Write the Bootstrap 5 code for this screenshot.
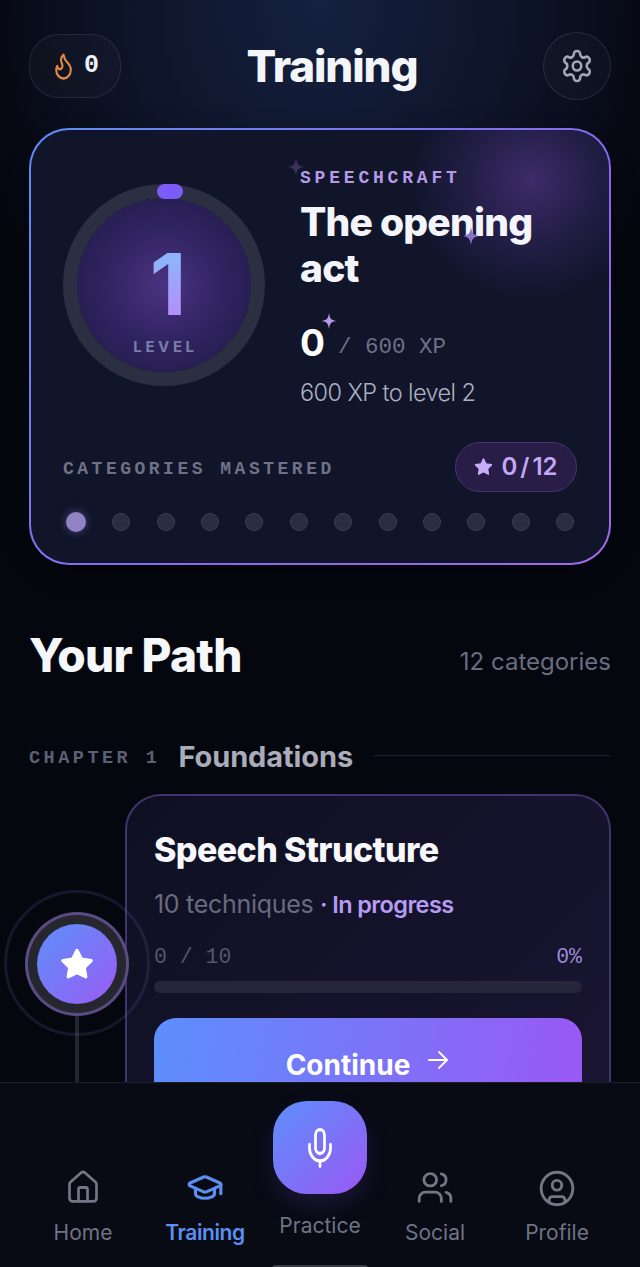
<!DOCTYPE html>
<html lang="en">
<head>
  <meta charset="UTF-8" />
  <meta name="viewport" content="width=device-width, initial-scale=1.0"/>
  <title>Training</title>
  <link href="https://cdn.jsdelivr.net/npm/bootstrap@5.3.0/dist/css/bootstrap.min.css" rel="stylesheet">
  <style>
    html, body { height: 100%; }
    body {
      height: 1267px;
      overflow: hidden;
      position: relative;
      font-family: "Inter", sans-serif;
      color: #f4f5fa;
      background:
        radial-gradient(ellipse 360px 430px at 50% 0, #15213f 0%, rgba(18,26,52,.75) 50%, rgba(5,7,15,0) 100%),
        #05070f;
    }
    .mono { font-family: "Liberation Mono", monospace; }
    .page { padding: 32px 29px 0; }
    .top-bar { height: 68px; }
    .streak-pill {
      width: 92px; height: 64px; border-radius: 30px;
      border: 1px solid rgba(255,255,255,.09);
      background: rgba(255,255,255,.025);
    }
    .streak-pill span { font-size: 25px; font-weight: 700; color: #eef0f6; }
    .page-title { font-size: 44px; font-weight: 800; letter-spacing: -1.1px; margin: 0; line-height: 1; color: #f4f5fa; }
    .gear-btn {
      width: 68px; height: 68px; border-radius: 50%;
      border: 1px solid rgba(255,255,255,.1);
      background: rgba(255,255,255,.025);
    }
    .hero-card {
      position: relative;
      height: 437px;
      margin-top: 28px;
      border: 2px solid transparent;
      border-radius: 40px;
      background:
        radial-gradient(circle 122px at 500px 50px, rgba(72,48,122,.8) 0%, rgba(56,40,102,.48) 50%, rgba(16,21,40,0) 100%) padding-box,
        linear-gradient(#10152a, #10152a) padding-box,
        linear-gradient(135deg, #5f8cf5 0%, #8a67ee 60%, #a06ae8 100%) border-box;
      padding: 54px 32px 0;
      box-shadow: 0 8px 24px rgba(0,0,0,.3);
    }
    .level-ring {
      width: 202px; height: 202px; flex: none;
      border-radius: 50%;
      border: 14px solid #2c2e42;
      background: radial-gradient(circle, #4a3380 0%, #2f2360 50%, #1f1a44 100%);
      background-origin: padding-box;
      background-clip: padding-box;
      position: relative;
    }
    .ring-cap {
      position: absolute; top: -14px; left: 80px;
      width: 26px; height: 15px; border-radius: 8px;
      background: #7c5cf6;
    }
    .level-num {
      font-size: 85px; font-weight: 700; line-height: 1;
      margin-top: 44px; margin-left: 8px;
      background: linear-gradient(180deg, #8fb4fb 20%, #b092f8 80%);
      -webkit-background-clip: text; background-clip: text; color: transparent;
    }
    .level-word { font-size: 15px; font-weight: 700; letter-spacing: 3.6px; color: #7a7ea6; margin-top: 9px; margin-left: 3px; }
    .hero-info { margin-left: 35px; margin-top: -16px; }
    .hero-eyebrow { font-size: 18px; font-weight: 700; letter-spacing: 3.8px; color: #b69ae8; line-height: 20px; }
    .hero-title { font-size: 39px; font-weight: 800; line-height: 46px; letter-spacing: -.8px; margin: 11px 0 0; color: #f4f5fa; }
    .xp-row { margin-top: 29px; line-height: 46px; }
    .xp-now { font-size: 37px; font-weight: 700; color: #fff; }
    .xp-max { font-size: 22.5px; color: #6d7185; margin-left: 13px; vertical-align: 3px; }
    .xp-left { font-size: 23.5px; font-weight: 300; letter-spacing: -.6px; color: #adb0bf; margin-top: 6px; line-height: 28px; }
    .mastered-label { font-size: 18px; font-weight: 700; letter-spacing: 3.5px; color: #6e7288; margin-top: 4px; }
    .mastered-row { margin-top: 35px; }
    .star-badge {
      width: 122px; height: 50px; border-radius: 25px;
      border: 1px solid #46346f;
      background: #281d47;
      color: #c4a6f7; font-size: 24px; font-weight: 600; word-spacing: -3px;
    }
    .dot-row { margin: 20px 3px 0 1px; padding-left: 2px; }
    .step-dot {
      width: 18px; height: 18px; border-radius: 50%;
      background: #2a2d3f; border: 1px solid #3d4052;
    }
    .step-dot.on { width: 20px; height: 20px; background: #9182c4; border: 0; box-shadow: 0 0 8px rgba(140,120,210,.5); }
    .sparkle { position: absolute; }
    .path-head { margin-top: 62px; }
    .path-title { font-size: 46px; font-weight: 800; letter-spacing: -.7px; margin: 0; line-height: 56px; color: #f6f7fb; }
    .path-count { font-size: 24px; color: #696d80; margin-top: 14px; }
    .chapter-row { margin-top: 54px; height: 40px; }
    .chapter-tag { font-size: 18.5px; font-weight: 700; letter-spacing: 3.5px; color: #5c6073; margin-top: 3px; }
    .chapter-name { font-size: 29px; font-weight: 700; color: #a9acb9; margin-left: 18px; letter-spacing: -.1px; }
    .chapter-rule { height: 1px; background: #1b1e2b; margin: 0 0 4px 20px; }
    .path-row { margin-top: 17px; }
    .path-rail { width: 96px; flex: none; position: relative; padding-top: 130px; z-index: 4; }
    .path-node {
      width: 80px; height: 80px; border-radius: 50%;
      background: linear-gradient(135deg, #5c8ffa 0%, #9a5cf4 100%);
      box-shadow: 0 0 0 9px #26262f, 0 0 0 12px #5a4b82;
      position: relative; z-index: 2; margin-left: 8px;
    }
    .path-halo {
      position: absolute; left: -25px; top: 96px;
      width: 146px; height: 146px; border-radius: 50%;
      border: 3px solid rgba(90,75,140,.24);
    }
    .path-line { width: 4px; height: 80px; background: #24252e; margin: 11px 0 0 46px; }
    .topic-card {
      width: 486px; flex: none;
      padding: 33px 27px 0;
      border: 2px solid #42326e;
      border-radius: 36px;
      height: 340px;
      color: #f4f5fa;
      background: linear-gradient(135deg, #0e1022 0%, #1a1533 100%);
      position: relative;
      background-clip: padding-box;
    }
    .topic-title { font-size: 34px; font-weight: 800; letter-spacing: -.6px; line-height: 42px; margin: 0; color: #f8f8fc; }
    .topic-sub { font-size: 25px; line-height: 30px; margin-top: 18px; color: #686b7e; letter-spacing: -.3px; }
    .topic-state { font-size: 23.5px; font-weight: 600; color: #b79cf4; letter-spacing: -.6px; }
    .topic-nums { font-size: 21.5px; margin-top: 25px; color: #545768; line-height: 24px; }
    .topic-pct { color: #9c8ad6; }
    .topic-bar { height: 12px; margin-top: 12px; background: #25263a; border-radius: 6px; }
    .btn-continue {
      width: 100%; height: 92px; margin-top: 25px; padding-top: 26px;
      border: 0; border-radius: 22px;
      background: linear-gradient(100deg, #5c8ffc 0%, #9a58f4 100%);
      color: #fff; font-size: 28px; font-weight: 700;
    }
    .tab-bar {
      position: absolute; left: 0; right: 0; bottom: 0; height: 185px;
      background: #080a14;
      border-top: 1px solid #1c1e29;
      z-index: 5;
    }
    .tab-item {
      position: absolute; top: 86px; width: 120px;
      text-align: center; font-size: 21px; line-height: 28px; color: #6f7384;
    }
    .tab-item svg { display: block; margin: 0 auto 13px; }
    .tab-item.short svg { margin-bottom: 11px; }
    .tab-item.active { color: #5b8ff0; font-weight: 600; letter-spacing: -.4px; }
    .mic-btn {
      position: absolute; left: 273px; top: 18px;
      width: 94px; height: 93px; border-radius: 34px;
      background: linear-gradient(135deg, #5c8ffa 0%, #9a58f4 100%);
      box-shadow: 0 12px 24px rgba(110,80,220,.16);
    }
    .mic-label {
      position: absolute; left: 260px; width: 120px; top: 129px;
      text-align: center; font-size: 21px; line-height: 28px; color: #6f7384;
    }
    .home-pill {
      position: absolute; left: 272px; bottom: -4px; width: 96px; height: 6px;
      border-radius: 3px; background: #3a3b45;
    }
  </style>
</head>
<body>
<div class="page">
  <div class="top-bar d-flex justify-content-between align-items-center">
    <div class="streak-pill d-flex align-items-center justify-content-center gap-2">
      <svg width="25" height="30" viewBox="0 0 24 24" preserveAspectRatio="none" fill="none" stroke="#e58a43" stroke-width="2" stroke-linecap="round" stroke-linejoin="round"><path d="M8.5 14.5A2.5 2.5 0 0 0 11 12c0-1.38-.5-2-1-3-1.072-2.143-.224-4.054 2-6 .5 2.5 2 4.9 4 6.5 2 1.6 3 3.5 3 5.5a7 7 0 1 1-14 0c0-1.153.433-2.294 1-3a2.5 2.5 0 0 0 2.5 2.5z"/></svg>
      <span class="mono">0</span>
    </div>
    <h1 class="page-title">Training</h1>
    <div class="gear-btn d-flex align-items-center justify-content-center">
      <svg width="34" height="36" viewBox="0 0 24 24" preserveAspectRatio="none" fill="none" stroke="#a3a6b5" stroke-width="1.8" stroke-linecap="round" stroke-linejoin="round"><path d="M12.22 2h-.44a2 2 0 0 0-2 2v.18a2 2 0 0 1-1 1.73l-.43.25a2 2 0 0 1-2 0l-.15-.08a2 2 0 0 0-2.73.73l-.22.38a2 2 0 0 0 .73 2.73l.15.1a2 2 0 0 1 1 1.72v.51a2 2 0 0 1-1 1.74l-.15.09a2 2 0 0 0-.73 2.73l.22.38a2 2 0 0 0 2.73.73l.15-.08a2 2 0 0 1 2 0l.43.25a2 2 0 0 1 1 1.73V20a2 2 0 0 0 2 2h.44a2 2 0 0 0 2-2v-.18a2 2 0 0 1 1-1.73l.43-.25a2 2 0 0 1 2 0l.15.08a2 2 0 0 0 2.73-.73l.22-.39a2 2 0 0 0-.73-2.73l-.15-.08a2 2 0 0 1-1-1.74v-.5a2 2 0 0 1 1-1.74l.15-.09a2 2 0 0 0 .73-2.73l-.22-.38a2 2 0 0 0-2.73-.73l-.15.08a2 2 0 0 1-2 0l-.43-.25a2 2 0 0 1-1-1.73V4a2 2 0 0 0-2-2z"/><circle cx="12" cy="12" r="3"/></svg>
    </div>
  </div>

  <div class="hero-card">
    <svg class="sparkle" style="left:257px;top:28px" width="16" height="18" viewBox="0 0 16 18"><path d="M8 0C9 6 10 8 16 9C10 10 9 12 8 18C7 12 6 10 0 9C6 8 7 6 8 0Z" fill="#3a3357"/></svg>
    <svg class="sparkle" style="left:432px;top:97px" width="16" height="18" viewBox="0 0 16 18"><path d="M8 0C9 6 10 8 16 9C10 10 9 12 8 18C7 12 6 10 0 9C6 8 7 6 8 0Z" fill="#8a72c8"/></svg>
    <svg class="sparkle" style="left:290px;top:183px" width="16" height="16" viewBox="0 0 16 18"><path d="M8 0C9 6 10 8 16 9C10 10 9 12 8 18C7 12 6 10 0 9C6 8 7 6 8 0Z" fill="#b498ea"/></svg>

    <div class="d-flex">
      <div class="level-ring d-flex flex-column align-items-center">
        <div class="ring-cap"></div>
        <div class="level-num">1</div>
        <div class="level-word">LEVEL</div>
      </div>
      <div class="hero-info">
        <div class="hero-eyebrow mono">SPEECHCRAFT</div>
        <h2 class="hero-title">The opening act</h2>
        <div class="xp-row"><span class="xp-now">0</span><span class="xp-max mono">/ 600 XP</span></div>
        <div class="xp-left">600 XP to level 2</div>
      </div>
    </div>

    <div class="mastered-row d-flex justify-content-between align-items-center">
      <span class="mastered-label mono">CATEGORIES MASTERED</span>
      <div class="star-badge d-flex align-items-center justify-content-center gap-2">
        <svg width="19" height="20" viewBox="0 0 24 24" fill="#c9adf9" stroke="#c9adf9" stroke-width="2" stroke-linejoin="round"><polygon points="12 2 15.09 8.26 22 9.27 17 14.14 18.18 21.02 12 17.77 5.82 21.02 7 14.14 2 9.27 8.91 8.26 12 2"/></svg>
        <span>0 / 12</span>
      </div>
    </div>

    <div class="dot-row d-flex justify-content-between align-items-center">
      <div class="step-dot on"></div><div class="step-dot"></div><div class="step-dot"></div><div class="step-dot"></div>
      <div class="step-dot"></div><div class="step-dot"></div><div class="step-dot"></div><div class="step-dot"></div>
      <div class="step-dot"></div><div class="step-dot"></div><div class="step-dot"></div><div class="step-dot"></div>
    </div>
  </div>

  <div class="path-head d-flex justify-content-between align-items-center">
    <h2 class="path-title">Your Path</h2>
    <span class="path-count">12 categories</span>
  </div>

  <div class="chapter-row d-flex align-items-center">
    <span class="chapter-tag mono text-nowrap">CHAPTER 1</span>
    <span class="chapter-name text-nowrap">Foundations</span>
    <div class="chapter-rule flex-grow-1"></div>
  </div>

  <div class="path-row d-flex">
    <div class="path-rail">
      <div class="path-halo"></div>
      <div class="path-node d-flex align-items-center justify-content-center">
        <svg width="34" height="34" viewBox="0 0 24 24" fill="#fff" stroke="#fff" stroke-width="2.4" stroke-linejoin="round"><polygon points="12 2.5 15.09 8.6 22 9.6 17 14.4 18.18 21 12 17.9 5.82 21 7 14.4 2 9.6 8.91 8.6 12 2.5"/></svg>
      </div>
      <div class="path-line"></div>
    </div>
    <div class="card topic-card">
      <h3 class="topic-title">Speech Structure</h3>
      <div class="topic-sub">10 techniques <span class="topic-state">· In progress</span></div>
      <div class="topic-nums mono d-flex justify-content-between"><span>0 / 10</span><span class="topic-pct">0%</span></div>
      <div class="topic-bar"></div>
      <button class="btn btn-continue d-flex align-items-start justify-content-center gap-3" type="button">
        <span>Continue</span>
        <svg class="mt-1" width="24" height="24" viewBox="0 0 24 24" fill="none" stroke="#fff" stroke-width="1.8" stroke-linecap="round" stroke-linejoin="round"><path d="M3 12h18"/><path d="M13 4l8 8-8 8"/></svg>
      </button>
    </div>
  </div>
</div>

<nav class="tab-bar">
  <div class="tab-item" style="left:23px">
    <svg width="36" height="37" viewBox="0 0 24 24" preserveAspectRatio="none" fill="none" stroke="#737687" stroke-width="1.8" stroke-linecap="round" stroke-linejoin="round"><path d="M15 21v-8a1 1 0 0 0-1-1h-4a1 1 0 0 0-1 1v8"/><path d="M3 10a2 2 0 0 1 .709-1.528l7-5.999a2 2 0 0 1 2.582 0l7 5.999A2 2 0 0 1 21 10v9a2 2 0 0 1-2 2H5a2 2 0 0 1-2-2z"/></svg>
    Home
  </div>
  <div class="tab-item active" style="left:145px">
    <svg width="38" height="37" viewBox="0 0 24 24" preserveAspectRatio="none" fill="none" stroke="#5b8ff0" stroke-width="2" stroke-linecap="round" stroke-linejoin="round"><path d="M21.42 10.922a1 1 0 0 0-.019-1.838L12.83 5.18a2 2 0 0 0-1.66 0L2.6 9.08a1 1 0 0 0 0 1.832l8.57 3.908a2 2 0 0 0 1.66 0z"/><path d="M22 10v6"/><path d="M6 12.5V16a6 3 0 0 0 12 0v-3.5"/></svg>
    Training
  </div>
  <div class="mic-btn d-flex align-items-center justify-content-center">
    <svg width="36" height="44" viewBox="0 0 24 24" preserveAspectRatio="none" fill="none" stroke="#fff" stroke-width="1.8" stroke-linecap="round" stroke-linejoin="round"><path d="M12 2a3 3 0 0 0-3 3v7a3 3 0 0 0 6 0V5a3 3 0 0 0-3-3Z"/><path d="M19 10v2a7 7 0 0 1-14 0v-2"/><line x1="12" y1="19" x2="12" y2="22"/></svg>
  </div>
  <div class="mic-label">Practice</div>
  <div class="tab-item" style="left:375px">
    <svg width="38" height="37" viewBox="0 0 24 24" preserveAspectRatio="none" fill="none" stroke="#737687" stroke-width="1.8" stroke-linecap="round" stroke-linejoin="round"><path d="M16 21v-2a4 4 0 0 0-4-4H6a4 4 0 0 0-4 4v2"/><circle cx="9" cy="7" r="4"/><path d="M22 21v-2a4 4 0 0 0-3-3.87"/><path d="M16 3.13a4 4 0 0 1 0 7.75"/></svg>
    Social
  </div>
  <div class="tab-item short" style="left:497px">
    <svg width="38" height="39" viewBox="0 0 24 24" preserveAspectRatio="none" fill="none" stroke="#737687" stroke-width="1.8" stroke-linecap="round" stroke-linejoin="round"><circle cx="12" cy="12" r="10"/><circle cx="12" cy="10" r="3"/><path d="M7 20.662V19a2 2 0 0 1 2-2h6a2 2 0 0 1 2 2v1.662"/></svg>
    Profile
  </div>
  <div class="home-pill"></div>
</nav>

<script src="https://cdn.jsdelivr.net/npm/bootstrap@5.3.0/dist/js/bootstrap.bundle.min.js"></script>
</body>
</html>
